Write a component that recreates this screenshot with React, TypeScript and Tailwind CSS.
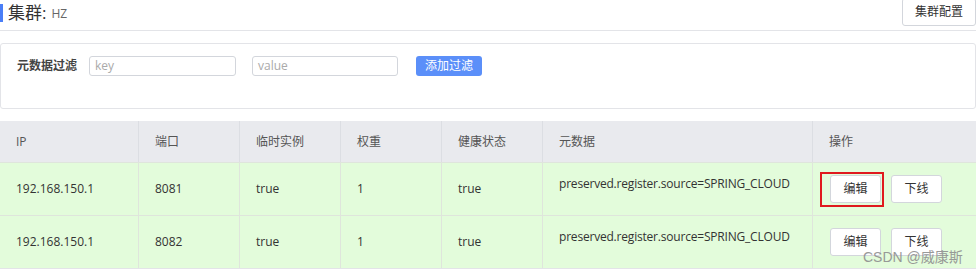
import React from "react";

const font = { fontFamily: '"Open Sans", "Noto Sans CJK SC", sans-serif' };

const cols = [
  { label: "IP", w: "w-[139px]" },
  { label: "端口", w: "w-[101px]" },
  { label: "临时实例", w: "w-[101px]" },
  { label: "权重", w: "w-[101px]" },
  { label: "健康状态", w: "w-[101px]" },
  { label: "元数据", w: "w-[270px]" },
  { label: "操作", w: "flex-1" },
];

const rows = [
  { ip: "192.168.150.1", port: "8081", eph: "true", weight: "1", healthy: "true", meta: "preserved.register.source=SPRING_CLOUD", hl: true },
  { ip: "192.168.150.1", port: "8082", eph: "true", weight: "1", healthy: "true", meta: "preserved.register.source=SPRING_CLOUD", hl: false },
];

function Btn({ children }: { children: React.ReactNode }) {
  return (
    <div className="h-[28px] w-[51px] flex items-center justify-center bg-white border border-[#d3d6dc] rounded-[3px] text-[12px] text-[#333]">
      {children}
    </div>
  );
}

export default function App() {
  return (
    <div className="w-[978px] h-[275px] bg-white relative overflow-hidden" style={font}>
      <div className="w-[976px]">
        {/* Title bar */}
        <div className="flex items-start justify-between h-[31px] border-b border-[#e3e4e8]">
          <div className="flex items-center mt-[3px]">
            <div className="w-[3px] h-[18px] bg-[#4a7ef7]" />
            <span className="ml-[5px] text-[17px] leading-[18px] text-[#333]">集群:</span>
            <span className="ml-[5px] text-[12px] leading-[18px] text-[#666] mt-[2px]">HZ</span>
          </div>
          <div className="mt-[-2px] h-[28px] w-[74px] flex items-center justify-center border border-[#d3d6dc] rounded-[3px] text-[12px] text-[#333] bg-white">
            集群配置
          </div>
        </div>

        {/* Filter panel */}
        <div className="mt-[12px] h-[66px] border border-[#e3e4e8] rounded-[3px] flex items-start pt-[12px] pl-[16px]">
          <span className="text-[12px] font-semibold text-[#444] leading-[20px]">元数据过滤</span>
          <div className="ml-[12px] w-[147px] h-[20px] border border-[#d3d6dc] rounded-[3px] flex items-center px-[5px] text-[12px] text-[#aaa]">
            key
          </div>
          <div className="ml-[16px] w-[146px] h-[20px] border border-[#d3d6dc] rounded-[3px] flex items-center px-[5px] text-[12px] text-[#aaa]">
            value
          </div>
          <div className="ml-[18px] w-[66px] h-[20px] rounded-[3px] bg-[#5b8ff9] flex items-center justify-center text-[12px] text-white">
            添加过滤
          </div>
        </div>

        {/* Table */}
        <div className="mt-[12px] border-b border-[#e3e4e8]">
          <div className="flex h-[41px] bg-[#e9eaee]">
            {cols.map((c, i) => (
              <div
                key={c.label}
                className={`${c.w} flex items-center pl-[16px] text-[12px] text-[#555] ${i < cols.length - 1 ? "border-r border-[#dcdee3]" : ""}`}
              >
                {c.label}
              </div>
            ))}
          </div>
          {rows.map((r, ri) => (
            <div key={ri} className="flex h-[53px] bg-[#e3fcdb] border-t border-[#dfe5dc]">
              <div className="w-[139px] border-r border-[#dfe5dc] flex items-center pl-[16px] text-[12px] text-[#333]">{r.ip}</div>
              <div className="w-[101px] border-r border-[#dfe5dc] flex items-center pl-[16px] text-[12px] text-[#333]">{r.port}</div>
              <div className="w-[101px] border-r border-[#dfe5dc] flex items-center pl-[16px] text-[12px] text-[#333]">{r.eph}</div>
              <div className="w-[101px] border-r border-[#dfe5dc] flex items-center pl-[16px] text-[12px] text-[#333]">{r.weight}</div>
              <div className="w-[101px] border-r border-[#dfe5dc] flex items-center pl-[16px] text-[12px] text-[#333]">{r.healthy}</div>
              <div className="w-[270px] border-r border-[#dfe5dc] pl-[16px] pt-[13px] text-[12px] leading-[16px] tracking-[-0.2px] text-[#333]">{r.meta}</div>
              <div className="flex-1 flex items-center pl-[17px] gap-[10px]">
                <div className="relative">
                  {r.hl && (
                    <div className="absolute left-[-10px] top-[-3px] w-[64px] h-[35px] border-2 border-[#e0191e]" />
                  )}
                  <Btn>编辑</Btn>
                </div>
                <Btn>下线</Btn>
              </div>
            </div>
          ))}
        </div>
      </div>

      <div
        className="absolute left-[863px] top-[248px] text-[14px] leading-[18px] text-[#8f8f8f] opacity-90"
        style={{ fontFamily: '"Liberation Sans", "Noto Sans CJK SC", sans-serif' }}
      >
        CSDN @威康斯
      </div>
    </div>
  );
}
